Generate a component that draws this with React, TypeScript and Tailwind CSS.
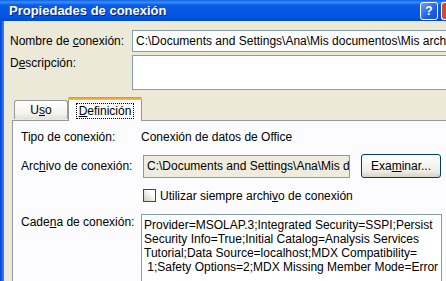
import React from "react";

const FONT = { fontFamily: "Tahoma, 'Liberation Sans', Arial, sans-serif" };

const CADENA = [
  "Provider=MSOLAP.3;Integrated Security=SSPI;Persist",
  "Security Info=True;Initial Catalog=Analysis Services",
  "Tutorial;Data Source=localhost;MDX Compatibility=",
  " 1;Safety Options=2;MDX Missing Member Mode=Error",
];

function TitleBar() {
  return (
    <div className="h-[21px] shrink-0 flex items-center justify-between pl-[9px] bg-[linear-gradient(to_bottom,#0A5FEF_0%,#3C8EF7_10%,#0A5AE6_25%,#0055E3_80%,#0049CE_100%)]">
      <span className="text-white font-bold text-[13px] leading-none [text-shadow:1px_1px_0_#0A1E7A]">
        Propiedades de conexión
      </span>
      <div className="flex items-center gap-[3px] pt-[1px]">
        <div className="w-[18px] h-[18px] rounded-[3px] border border-white bg-[linear-gradient(135deg,#6FA0FF,#1F5FE8_60%,#1A4CCB)] flex items-center justify-center text-white font-bold text-[12px] leading-none">
          ?
        </div>
        <div className="w-[5px] h-[18px] rounded-l-[3px] border border-r-0 border-white bg-[#D9472A]" />
      </div>
    </div>
  );
}

function Field({ children, className = "" }: { children?: React.ReactNode; className?: string }) {
  return (
    <div className={`border border-[#7F9DB9] px-[3px] whitespace-nowrap overflow-hidden ${className}`}>
      {children}
    </div>
  );
}

export default function App() {
  return (
    <div className="w-[446px] h-[281px] overflow-hidden flex flex-col bg-[#ECE9D8]" style={FONT}>
      <TitleBar />
      <div className="flex-1 flex min-h-0">
        <div className="w-[4px] shrink-0 bg-[linear-gradient(to_right,#0841C6,#1E66F0_60%,#3C8CF8)]" />
        <div className="w-[520px] shrink-0 pl-[6px] pt-[9px] text-[12px] leading-[14px] text-black">
          {/* Nombre */}
          <div className="flex items-center h-[22px]">
            <span className="w-[122px]">
              Nombre de <u>c</u>onexión:
            </span>
            <Field className="flex-1 h-[22px] flex items-center bg-white">
              C:\Documents and Settings\Ana\Mis documentos\Mis archivos de origen de datos\
            </Field>
          </div>
          {/* Descripción */}
          <div className="flex mt-[3px]">
            <span className="w-[122px] pt-[1px]">
              D<u>e</u>scripción:
            </span>
            <Field className="flex-1 h-[35px] bg-white" />
          </div>

          {/* Tabs */}
          <div className="mt-[7px] ml-[2px]">
            <div className="flex items-end h-[23px] pl-[2px]">
              <div className="w-[54px] h-[19px] mb-[1px] border border-b-0 border-[#919B9C] rounded-t-[3px] bg-[linear-gradient(to_bottom,#FFFFFF,#F3F2EC_70%,#E4E2D8)] flex items-center justify-center">
                U<u>s</u>o
              </div>
              <div className="w-[74px] h-[24px] -mb-[1px] relative z-10 border-x border-[#919B9C] rounded-t-[3px] bg-[#FCFCFE] flex flex-col">
                <div className="h-[3px] rounded-t-[2px] bg-[linear-gradient(to_bottom,#E68B2C,#FFC73C)] -mx-[1px]" />
                <div className="flex-1 flex items-center justify-center">
                  <span className="border border-dotted border-black px-[2px] leading-[14px]">
                    <u>D</u>efinición
                  </span>
                </div>
              </div>
            </div>
            <div className="border border-[#919B9C] bg-[#FCFCFE] h-[200px] pl-[8px] pt-[9px]">
              <div className="flex items-center h-[14px]">
                <span className="w-[120px]">Tipo de conexión:</span>
                <span>Conexión de datos de Office</span>
              </div>
              <div className="flex items-center h-[24px] mt-[10px]">
                <span className="w-[122px]">
                  Arc<u>h</u>ivo de conexión:
                </span>
                <Field className="w-[207px] h-[23px] flex items-center bg-[#EFECDF]">
                  C:\Documents and Settings\Ana\Mis documentos
                </Field>
                <button className="ml-[11px] w-[80px] h-[24px] rounded-[3px] border border-[#003C74] bg-[linear-gradient(to_bottom,#FFFFFF,#F0EFE8_70%,#D8D3C6)] text-[12px] leading-[14px] text-black">
                  Exa<u>m</u>inar...
                </button>
              </div>
              <div className="flex items-center mt-[11px] ml-[122px] h-[13px]">
                <div className="w-[13px] h-[13px] shrink-0 border border-[#1C5180] bg-[linear-gradient(225deg,#FFFFFF_30%,#E4E2D6_70%,#D0CEC2)]" />
                <span className="ml-[4px]">
                  Utilizar siempre archi<u>v</u>o de conexión
                </span>
              </div>
              <div className="flex mt-[12px]">
                <span className="w-[120px] pt-[1px]">
                  Cade<u>n</u>a de conexión:
                </span>
                <div className="w-[301px] h-[80px] border border-[#7F9DB9] bg-white px-[2px] pt-[3px] whitespace-pre">
                  {CADENA.map((l) => (
                    <div key={l}>{l}</div>
                  ))}
                </div>
              </div>
            </div>
          </div>
        </div>
      </div>
    </div>
  );
}
